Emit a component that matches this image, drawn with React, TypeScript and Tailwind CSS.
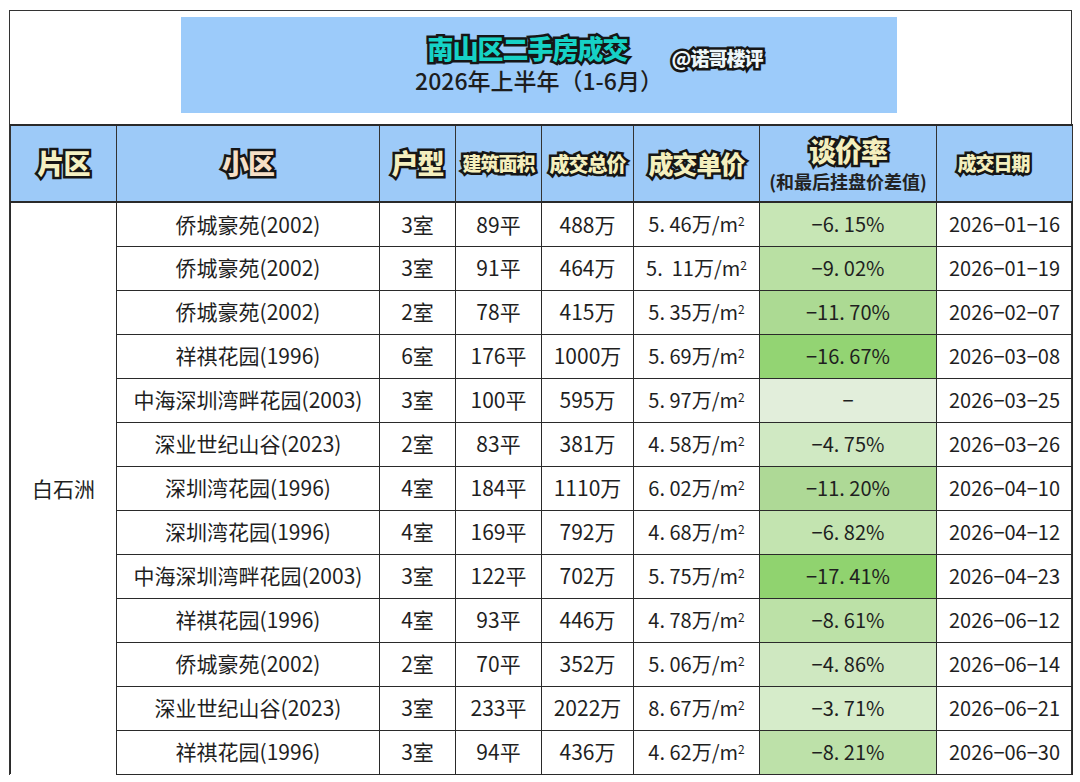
import React from 'react'

type Row = {
  name: string
  room: string
  area: string
  total: string
  unit: string
  rate: string
  bg: string
  date: string
}

const rows: Row[] = [
  { name: '侨城豪苑(2002)', room: '3室', area: '89平', total: '488万', unit: '5. 46万/m', rate: '−6. 15%', bg: 'bg-[#c7e6b5]', date: '2026−01−16' },
  { name: '侨城豪苑(2002)', room: '3室', area: '91平', total: '464万', unit: '5.  11万/m', rate: '−9. 02%', bg: 'bg-[#b9e0a3]', date: '2026−01−19' },
  { name: '侨城豪苑(2002)', room: '2室', area: '78平', total: '415万', unit: '5. 35万/m', rate: '−11. 70%', bg: 'bg-[#acda93]', date: '2026−02−07' },
  { name: '祥祺花园(1996)', room: '6室', area: '176平', total: '1000万', unit: '5. 69万/m', rate: '−16. 67%', bg: 'bg-[#93d473]', date: '2026−03−08' },
  { name: '中海深圳湾畔花园(2003)', room: '3室', area: '100平', total: '595万', unit: '5. 97万/m', rate: '−', bg: 'bg-[#e2eedb]', date: '2026−03−25' },
  { name: '深业世纪山谷(2023)', room: '2室', area: '83平', total: '381万', unit: '4. 58万/m', rate: '−4. 75%', bg: 'bg-[#d0e9c3]', date: '2026−03−26' },
  { name: '深圳湾花园(1996)', room: '4室', area: '184平', total: '1110万', unit: '6. 02万/m', rate: '−11. 20%', bg: 'bg-[#aed996]', date: '2026−04−10' },
  { name: '深圳湾花园(1996)', room: '4室', area: '169平', total: '792万', unit: '4. 68万/m', rate: '−6. 82%', bg: 'bg-[#c3e4b0]', date: '2026−04−12' },
  { name: '中海深圳湾畔花园(2003)', room: '3室', area: '122平', total: '702万', unit: '5. 75万/m', rate: '−17. 41%', bg: 'bg-[#90d36f]', date: '2026−04−23' },
  { name: '祥祺花园(1996)', room: '4室', area: '93平', total: '446万', unit: '4. 78万/m', rate: '−8. 61%', bg: 'bg-[#bce1a7]', date: '2026−06−12' },
  { name: '侨城豪苑(2002)', room: '2室', area: '70平', total: '352万', unit: '5. 06万/m', rate: '−4. 86%', bg: 'bg-[#cfe8c1]', date: '2026−06−14' },
  { name: '深业世纪山谷(2023)', room: '3室', area: '233平', total: '2022万', unit: '8. 67万/m', rate: '−3. 71%', bg: 'bg-[#d6ecca]', date: '2026−06−21' },
  { name: '祥祺花园(1996)', room: '3室', area: '94平', total: '436万', unit: '4. 62万/m', rate: '−8. 21%', bg: 'bg-[#bde1a9]', date: '2026−06−30' },
]

const outline = 'font-black [paint-order:stroke_fill] [-webkit-text-stroke:5px_#161616] tracking-[-1px]'
const thin = '[-webkit-text-stroke:4px_#161616]'
const th = 'border-x border-[#333] text-center align-middle p-0'
const td = 'border border-[#2a2a2a] text-center align-middle p-0 h-[44px] text-[21px] text-[#1f1f1f]'
const tdNum = 'border border-[#2a2a2a] text-center align-middle p-0 h-[44px] text-[20px] text-[#1f1f1f]'

export default function App() {
  return (
    <div className="w-[1080px] h-[782px] overflow-hidden bg-white font-['Noto_Sans_CJK_SC',sans-serif]">
      <div className="ml-[9px] mt-[10px] w-[1063px] border-x border-t border-[#333]">
        {/* 标题 */}
        <div className="h-[113px] pl-[171px] pt-[6px]">
          <div className="w-[716px] h-[96px] bg-[#9ccbfa] flex flex-col items-center">
            <div className="flex items-end mt-[15px] ml-[112px]">
              <span className={`text-[26px] leading-[32px] text-[#16d2c6] ${outline}`}>南山区二手房成交</span>
              <span className={`ml-[44px] mb-[-6px] text-[19px] leading-[24px] text-[#eef6fa] ${outline} ${thin}`}>@诺哥楼评</span>
            </div>
            <div className="mt-[1px] text-[23px] leading-[30px] text-[#1d1d1d] font-medium">2026年上半年（1-6月）</div>
          </div>
        </div>

        <table className="w-[1062px] border-collapse table-fixed">
          <colgroup>
            <col className="w-[106px]" />
            <col className="w-[263px]" />
            <col className="w-[76px]" />
            <col className="w-[86px]" />
            <col className="w-[92px]" />
            <col className="w-[126px]" />
            <col className="w-[177px]" />
            <col className="w-[136px]" />
          </colgroup>
          <thead>
            <tr className="h-[77px] bg-[#9dcaf8] border-y-2 border-[#2a2a2a]">
              <th className={th}><span className={`text-[27px] text-[#f4f1c2] ${outline}`}>片区</span></th>
              <th className={th}><span className={`text-[27px] text-[#f7dfc6] ${outline}`}>小区</span></th>
              <th className={th}><span className={`text-[27px] text-[#f4efbe] ${outline}`}>户型</span></th>
              <th className={th}><span className={`text-[19px] text-[#f4efbe] ${outline} ${thin}`}>建筑面积</span></th>
              <th className={th}><span className={`text-[20px] text-[#f4efbe] ${outline} ${thin}`}>成交总价</span></th>
              <th className={th}><span className={`text-[25px] text-[#f4efbe] ${outline}`}>成交单价</span></th>
              <th className={th}>
                <div className="flex flex-col items-center">
                  <span className={`text-[27px] leading-[32px] text-[#f4efbe] ${outline}`}>谈价率</span>
                  <span className="text-[18px] leading-[24px] font-bold text-[#222] mt-[2px]">(和最后挂盘价差值)</span>
                </div>
              </th>
              <th className={th}><span className={`text-[19px] text-[#f4efbe] ${outline} ${thin} mr-[22px]`}>成交日期</span></th>
            </tr>
          </thead>
          <tbody>
            {rows.map((r, i) => (
              <tr key={i}>
                {i === 0 && (
                  <td rowSpan={rows.length} className={`${td} border-b-0`}>白石洲</td>
                )}
                <td className={td}>{r.name}</td>
                <td className={td}>{r.room}</td>
                <td className={td}>{r.area}</td>
                <td className={td}>{r.total}</td>
                <td className={`${tdNum} whitespace-pre`}>
                  {r.unit}
                  <sup className="text-[12px]">2</sup>
                </td>
                <td className={`${tdNum} ${r.bg}`}>{r.rate}</td>
                <td className={tdNum}>{r.date}</td>
              </tr>
            ))}
          </tbody>
        </table>
      </div>
    </div>
  )
}
